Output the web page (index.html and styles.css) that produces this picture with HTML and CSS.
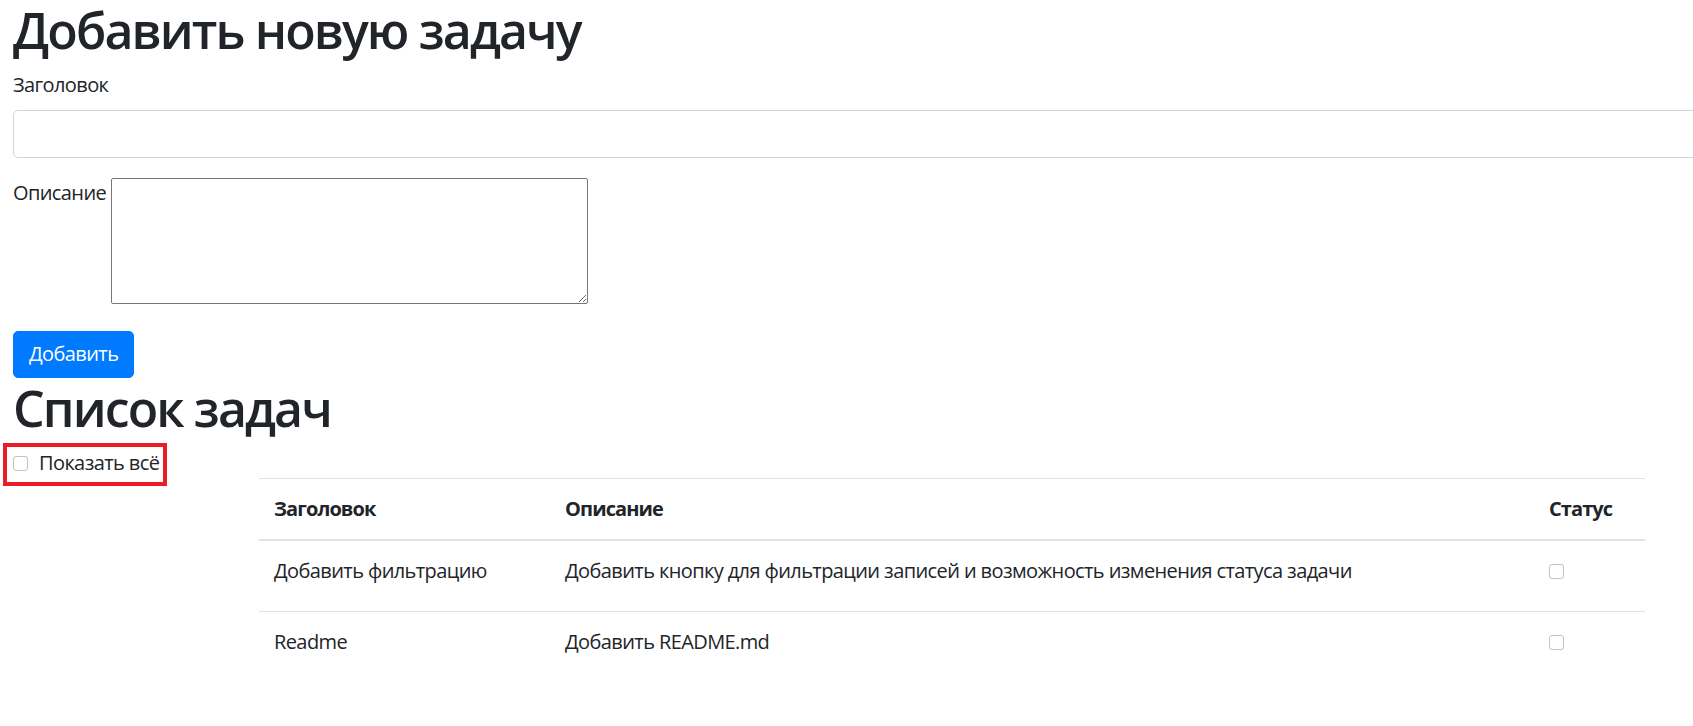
FILE: index.html
```html
<!DOCTYPE html>
<html lang="ru">
<head>
<meta charset="utf-8">
<title>Задачи</title>
<link rel="stylesheet" href="styles.css">
</head>
<body>
<main class="page">
  <h1 class="title">Добавить новую задачу</h1>
  <form class="task-form">
    <div class="field">
      <label class="field-label" for="title">Заголовок</label>
      <input class="text-input" id="title" type="text">
    </div>
    <div class="field field-inline">
      <label class="field-label inline-label" for="desc">Описание</label>
      <textarea class="textarea" id="desc"></textarea>
    </div>
    <button class="btn-primary" type="button">Добавить</button>
  </form>
  <h1 class="title">Список задач</h1>
  <div class="filter">
    <label class="check-label"><input type="checkbox" class="check"><span>Показать всё</span></label>
    <span class="highlight"></span>
  </div>
  <table class="tasks">
    <colgroup>
      <col class="col-title">
      <col class="col-desc">
      <col class="col-status">
    </colgroup>
    <thead>
      <tr>
        <th>Заголовок</th>
        <th>Описание</th>
        <th>Статус</th>
      </tr>
    </thead>
    <tbody>
      <tr>
        <td>Добавить фильтрацию</td>
        <td>Добавить кнопку для фильтрации записей и возможность изменения статуса задачи</td>
        <td><input type="checkbox" class="check check-cell"></td>
      </tr>
      <tr>
        <td>Readme</td>
        <td>Добавить README.md</td>
        <td><input type="checkbox" class="check check-cell"></td>
      </tr>
    </tbody>
  </table>
</main>
</body>
</html>
```

FILE: styles.css
```css
html, body {
  overflow-x: hidden;
}
body {
  margin: 0;
  font-family: "Open Sans", "Noto Sans", sans-serif;
  font-size: 20px;
  line-height: 30px;
  letter-spacing: -0.6px;
  color: #212529;
  background: #fff;
}
.page {
  padding-left: 13px;
}
.title {
  margin: 0 0 10px;
  font-size: 50px;
  line-height: 60px;
  font-weight: 600;
  letter-spacing: -1.9px;
}
.task-form {
  margin: 0;
}
.field {
  margin-bottom: 20px;
}
.field-label {
  display: block;
  margin-bottom: 10px;
}
.text-input {
  display: block;
  box-sizing: border-box;
  width: 1720px;
  height: 47.5px;
  padding: 7.5px 15px;
  border: 1px solid #ced4da;
  border-radius: 5px;
  font: inherit;
  color: #495057;
  background: #fff;
}
.field-inline {
  display: flex;
  align-items: flex-start;
  gap: 5px;
  margin-bottom: 27px;
}
.inline-label {
  margin-bottom: 0;
}
.textarea {
  box-sizing: border-box;
  width: 477px;
  height: 126px;
  margin: 0;
  padding: 2px;
  border: 1px solid #767676;
  border-radius: 2px;
  font-family: "DejaVu Sans Mono", monospace;
  font-size: 16px;
}
.btn-primary {
  display: block;
  box-sizing: border-box;
  height: 47.5px;
  padding: 7.5px 15px;
  border: 1px solid #007bff;
  border-radius: 5px;
  background: #007bff;
  color: #fff;
  font: inherit;
  letter-spacing: -0.6px;
  cursor: pointer;
}
.filter {
  position: relative;
  height: 30px;
}
.check-label {
  display: inline-flex;
  align-items: center;
  gap: 11px;
}
.check {
  appearance: none;
  -webkit-appearance: none;
  box-sizing: border-box;
  width: 15px;
  height: 15px;
  margin: 0;
  border: 1px solid #c2c2c2;
  border-radius: 3px;
  background: #fff;
}
.highlight {
  position: absolute;
  left: -10px;
  top: -5px;
  width: 164px;
  height: 43px;
  box-sizing: border-box;
  border: 4px solid #ed1c24;
  pointer-events: none;
}
.tasks {
  margin-left: 246px;
  width: 1386px;
  border-collapse: collapse;
  table-layout: fixed;
}
.col-title { width: 291px; }
.col-desc { width: 984px; }
.col-status { width: 111px; }
.tasks th,
.tasks td {
  padding: 15px;
  text-align: left;
  vertical-align: top;
  border-top: 1px solid #dee2e6;
}
.tasks th {
  font-weight: 700;
  letter-spacing: -0.9px;
  border-bottom: 2.5px solid #dee2e6;
}
.tasks td {
  padding-bottom: 25px;
}
.check-cell {
  display: block;
  margin-top: 7.5px;
}
```
